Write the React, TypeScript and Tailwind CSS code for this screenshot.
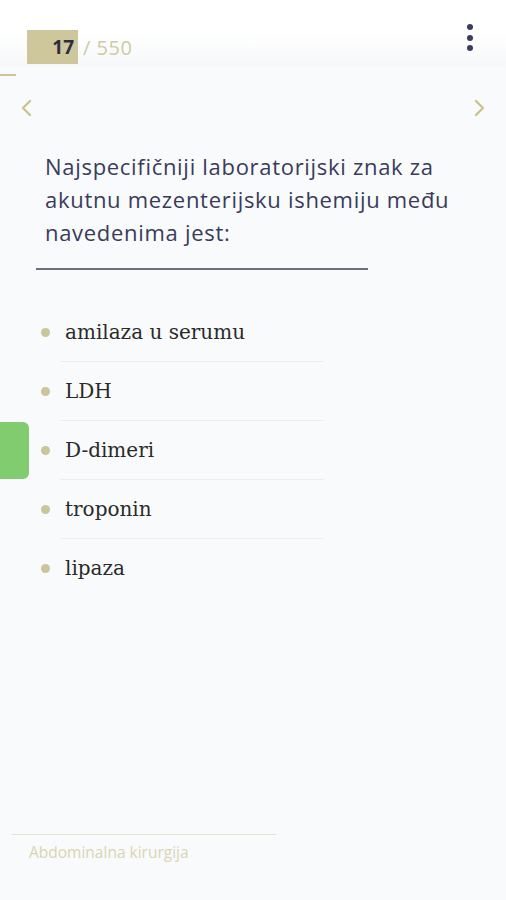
import * as React from 'react'

const answers = ['amilaza u serumu', 'LDH', 'D-dimeri', 'troponin', 'lipaza']

function Chevron({ dir }: { dir: 'left' | 'right' }) {
  return (
    <svg width="14" height="20" viewBox="0 0 14 20" fill="none">
      <path
        d={dir === 'left' ? 'M10 3 L3 10 L10 17' : 'M4 3 L11 10 L4 17'}
        stroke="#c9c58f"
        strokeWidth="2.4"
        strokeLinecap="round"
        strokeLinejoin="round"
      />
    </svg>
  )
}

export default function App() {
  return (
    <div className="relative flex h-[900px] w-[506px] flex-col overflow-hidden bg-[#f9fafb] font-['Open_Sans',sans-serif]">
      {/* header */}
      <header className="relative h-[66px] bg-gradient-to-b from-white via-white to-[#f6f8f9]">
        <div className="flex items-start pl-[27px] pt-[30px]">
          <span className="flex h-[34px] w-[51px] items-center justify-end bg-[#cdc79b] pr-[4px] text-[19px] font-bold text-[#2d2d3f]">
            17
          </span>
          <span className="ml-[5px] mt-[3px] text-[20px] tracking-[0.5px] text-[#cfcaa5]">/ 550</span>
        </div>
        <div className="absolute right-[33px] top-[24px] flex flex-col gap-[4.5px]">
          <span className="h-[6px] w-[6px] rounded-full bg-[#3a3c66]" />
          <span className="h-[6px] w-[6px] rounded-full bg-[#3a3c66]" />
          <span className="h-[6px] w-[6px] rounded-full bg-[#3a3c66]" />
        </div>
      </header>
      <div className="mt-[8px] h-[2px] w-[16px] bg-[#cbc597]" />

      {/* nav */}
      <div className="mt-[22px] flex items-center justify-between px-[20px]">
        <Chevron dir="left" />
        <Chevron dir="right" />
      </div>

      {/* question */}
      <div className="pl-[45px] pr-[31px] pt-[32px] text-[22px] leading-[33px] tracking-[0.7px] text-[#3a3b5c]">
        Najspecifičniji laboratorijski znak za akutnu mezenterijsku ishemiju među navedenima jest:
      </div>
      <div className="ml-[36px] mt-[19px] h-[2px] w-[332px] bg-[#6c6d80]" />

      {/* answers */}
      <ul className="mt-[33px] flex flex-col font-['DejaVu_Serif',serif] text-[20px] text-[#2a2a2a]">
        {answers.map((a, i) => (
          <li key={a} className="relative flex h-[59px] items-center">
            {a === 'D-dimeri' && (
              <span className="absolute left-0 top-[1px] h-[57px] w-[29px] rounded-r-[6px] bg-[#80cc6f]" />
            )}
            <span className="ml-[41px] h-[9px] w-[9px] rounded-full bg-[#cbc59a]" />
            <span className="ml-[15px] -mt-[2px]">{a}</span>
            {i < answers.length - 1 && (
              <span className="absolute bottom-0 left-[60px] h-[1px] w-[264px] bg-[#eceef0]" />
            )}
          </li>
        ))}
      </ul>

      {/* footer */}
      <div className="mt-auto mb-[36px]">
        <div className="ml-[12px] h-[1px] w-[264px] bg-[#e5e1c8]" />
        <div className="ml-[29px] mt-[6px] text-[15.5px] text-[#d9d5b3]">Abdominalna kirurgija</div>
      </div>
    </div>
  )
}
